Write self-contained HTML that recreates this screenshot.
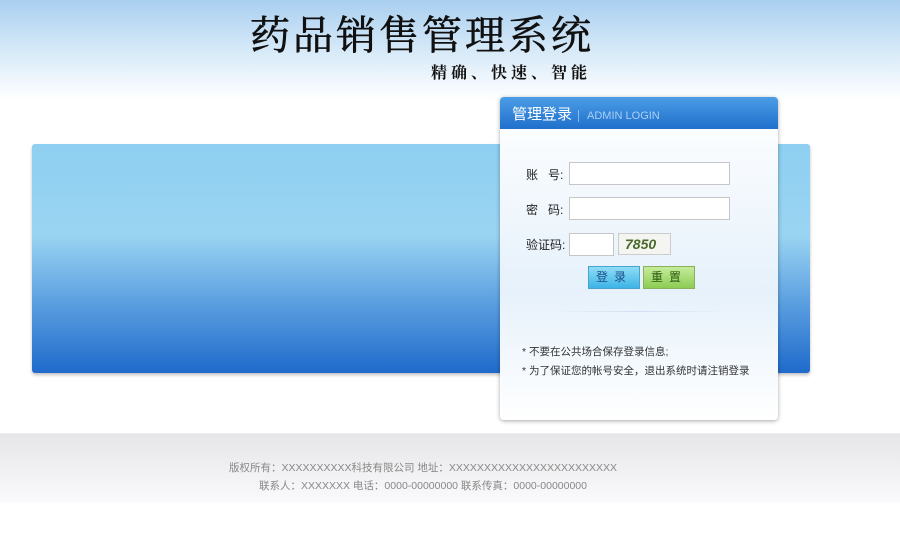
<!DOCTYPE html>
<html><head><meta charset="utf-8"><style>
*{margin:0;padding:0;box-sizing:border-box}
body{width:900px;height:542px;position:relative;overflow:hidden;background:#fff;font-family:"Liberation Sans","Noto Sans CJK SC",sans-serif}
.top{position:absolute;left:0;top:0;width:900px;height:100px;background:linear-gradient(#a9cff0,#d6e9f8 50%,#fff)}
.title{position:absolute;left:250px;top:4px;font-family:"Noto Serif CJK SC","Liberation Serif",serif;font-size:40px;letter-spacing:3px;color:#111;white-space:nowrap;-webkit-text-stroke:0.6px #111}
.sub{position:absolute;left:431px;top:60px;font-family:"Noto Serif CJK SC",serif;font-size:16px;letter-spacing:4px;color:#111;font-weight:bold;white-space:nowrap}
.band{position:absolute;left:32px;top:144px;width:778px;height:229px;border-radius:3px;background:linear-gradient(#8fcff1,#9ad4f2 40%,#5a9ee0 70%,#1f6acb);box-shadow:0 2px 3px rgba(0,0,0,.25)}
.foot{position:absolute;left:0;top:433px;width:900px;height:70px;background:linear-gradient(#e6e6e8,#fafafc);border-top:1px solid #eee;padding-right:54px}
.foot p{text-align:center;font-size:10.5px;color:#888;line-height:18px;white-space:nowrap}
.panel{position:absolute;left:500px;top:97px;width:278px;height:323px;border-radius:4px;background:linear-gradient(#fff,#e6f1fb 60%,#fff);box-shadow:0 1px 4px rgba(0,0,0,.35);overflow:hidden}
.ph{height:32px;background:linear-gradient(#4b9de6,#2070cc);color:#fff;font-size:15px;padding:6px 12px;white-space:nowrap}
.ph span{font-size:11px;color:#a8d0f4;margin-left:6px;border-left:1px solid #8cbbe8;padding-left:8px}
.lbl{position:absolute;left:26px;font-size:12px;color:#222}
.inp{position:absolute;left:69px;height:23px;border:1px solid #c6c6c6;background:#fff}
.btn{position:absolute;top:169px;width:52px;height:23px;font-size:12px;text-align:center;line-height:21px;letter-spacing:6px;border:1px solid}
.note{position:absolute;left:22px;font-size:10.5px;color:#333;white-space:nowrap}
</style></head><body>
<div class="top"></div>
<div class="title">药品销售管理系统</div>
<div class="sub">精确、快速、智能</div>
<div class="band"></div>
<div class="foot"><p style="margin-top:25px">版权所有：XXXXXXXXXX科技有限公司 地址：XXXXXXXXXXXXXXXXXXXXXXXX</p><p>联系人：XXXXXXX 电话：0000-00000000 联系传真：0000-00000000</p></div>
<div class="panel">
<div class="ph">管理登录<span>ADMIN LOGIN</span></div>
<div class="lbl" style="top:69px">账&nbsp;&nbsp;&nbsp;号:</div><div class="inp" style="top:65px;width:161px"></div>
<div class="lbl" style="top:104px">密&nbsp;&nbsp;&nbsp;码:</div><div class="inp" style="top:100px;width:161px"></div>
<div class="lbl" style="top:139px">验证码:</div><div class="inp" style="top:136px;width:45px"></div>
<div style="position:absolute;left:118px;top:136px;width:53px;height:22px;border:1px solid #ccc;background:#f4f4f0;font-style:italic;font-weight:bold;color:#4a6a2a;font-size:14px;padding-left:6px;line-height:20px">7850</div>
<div class="btn" style="left:88px;background:linear-gradient(#8fdcf6,#3cb4e6);border-color:#4aa3cc;color:#1a4e8a">登录</div>
<div class="btn" style="left:143px;background:linear-gradient(#c6ec9a,#8ccc54);border-color:#89b05a;color:#2c5a10">重置</div>
<div style="position:absolute;left:50px;top:214px;width:180px;height:1px;background:linear-gradient(90deg,transparent,#cfe0f0,transparent)"></div>
<div class="note" style="top:247px">* 不要在公共场合保存登录信息;</div>
<div class="note" style="top:266px">* 为了保证您的帐号安全，退出系统时请注销登录</div>
</div>
</body></html>
